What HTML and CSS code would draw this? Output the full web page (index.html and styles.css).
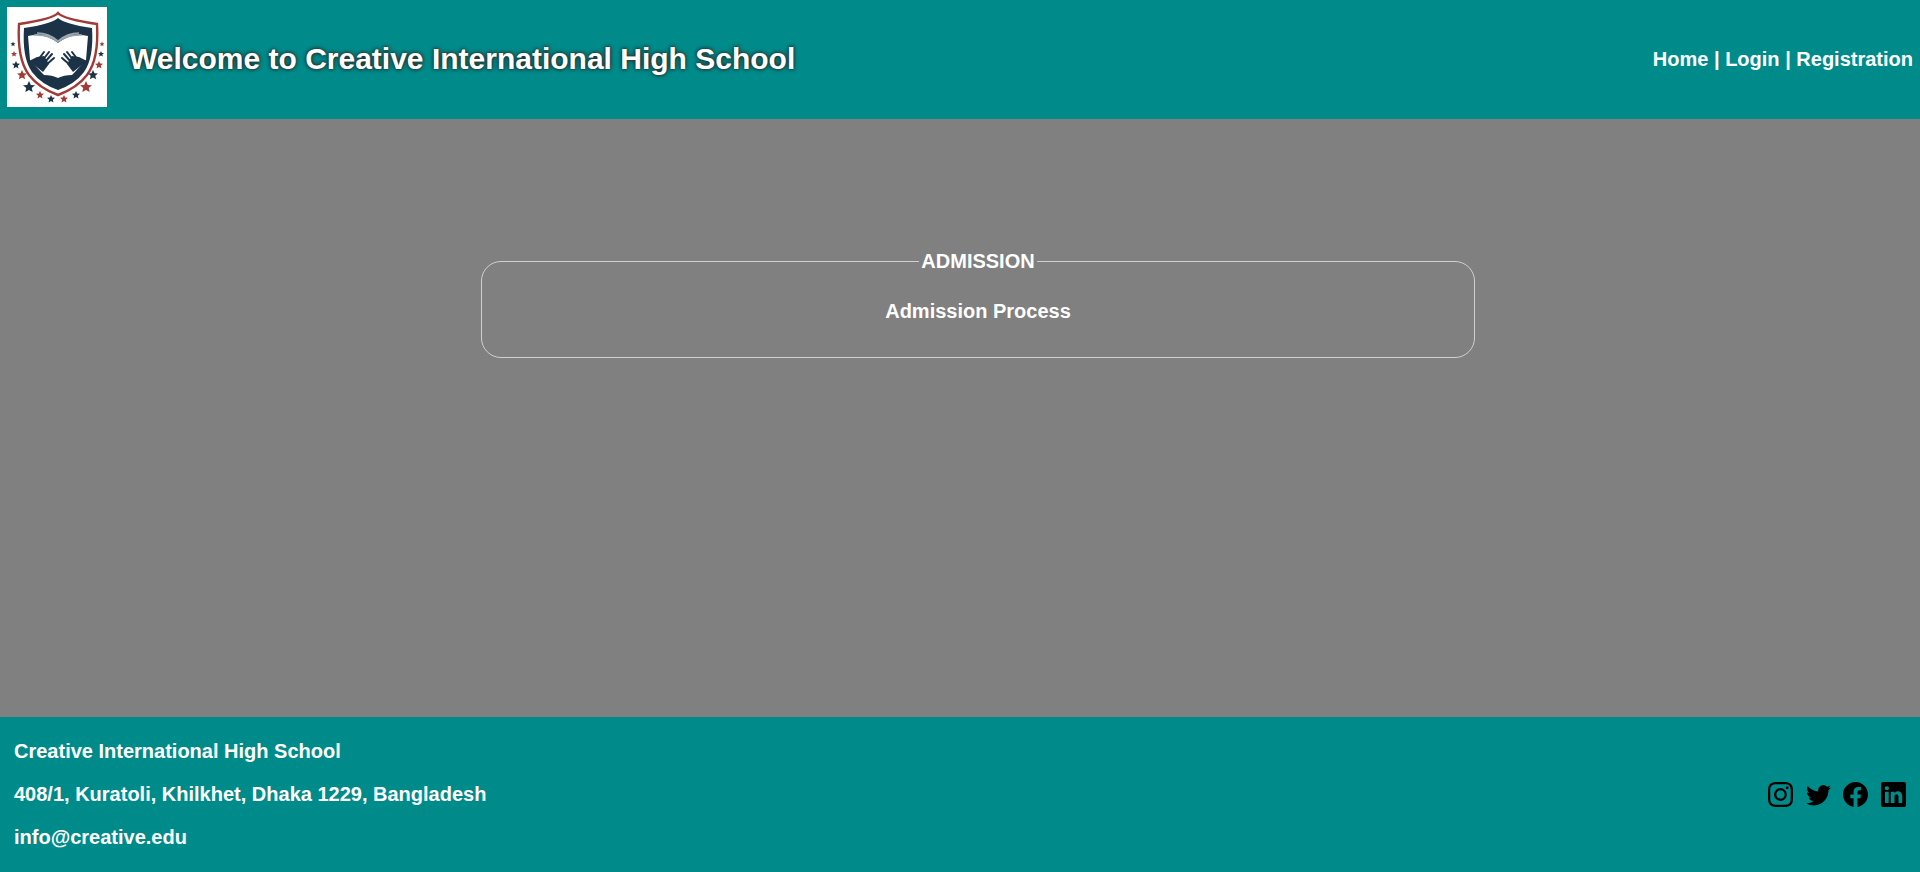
FILE: index.html
```html
<!DOCTYPE html>
<html lang="en">

<head>
    <meta charset="UTF-8" />
    <meta name="viewport" content="width=device-width, initial-scale=1.0" />
    <title>Creative International High School</title>
    <link rel="stylesheet" href="styles.css">
</head>

<body>
    <div class="page">
        <header class="header">
            <div class="brand">
                <div class="logo">
                    <svg viewBox="0 0 100 100" width="100" height="100">
                        <defs>
                            <polygon id="star" points="0,-1 .3,-.35 1,-.31 .46,.16 .62,.85 0,.48 -.62,.85 -.46,.16 -1,-.31 -.3,-.35" />
                            <g id="hand">
                                <path d="M22 54 L30 50 L37 49 L42 57 L36 65 Z" fill="#1c3347" />
                                <path d="M31 53 L37 45 M35 54 L42 45 M38 55 L45 47 M39 58 L47 51" stroke="#1c3347" stroke-width="2" stroke-linecap="round" fill="none" />
                            </g>
                        </defs>
                        <path d="M51 6 Q56 12 90 17 Q92 52 80 68 Q70 81 51 88 Q32 81 22 68 Q10 52 12 17 Q46 12 51 6 Z" fill="#fff" stroke="#a23b35" stroke-width="2.4" />
                        <path d="M51 11 Q58 17 85 21 Q87 51 77 65 Q68 77 51 83 Q34 77 25 65 Q15 51 17 21 Q44 17 51 11 Z" fill="#1c3347" />
                        <path d="M21 29 Q37 25 51 36 Q65 25 81 29 L79 53 L67 66 L65 68 Q57 68 51 71 Q45 68 37 68 L35 66 L23 53 Z" fill="#fff" />
                        <path d="M30 26 Q42 26 51 34 Q60 26 72 26 M27 28 Q41 27 51 35 Q61 27 75 28" fill="none" stroke="#9aa5ad" stroke-width="1.6" />
                        <use href="#hand" />
                        <use href="#hand" transform="translate(102 0) scale(-1 1)" />
                        <g fill="#1c3347">
                            <use href="#star" transform="translate(6 37) scale(2.5)" />
                            <use href="#star" transform="translate(9 58) scale(4)" />
                            <use href="#star" transform="translate(22 80) scale(6)" />
                            <use href="#star" transform="translate(44 92) scale(4)" />
                            <use href="#star" transform="translate(69 88) scale(4)" />
                            <use href="#star" transform="translate(86 68) scale(5)" />
                            <use href="#star" transform="translate(94 47) scale(3)" />
                        </g>
                        <g fill="#a23b35">
                            <use href="#star" transform="translate(7 47) scale(3)" />
                            <use href="#star" transform="translate(15 68) scale(5)" />
                            <use href="#star" transform="translate(33 88) scale(4)" />
                            <use href="#star" transform="translate(57 92) scale(4)" />
                            <use href="#star" transform="translate(79 80) scale(6)" />
                            <use href="#star" transform="translate(92 58) scale(4)" />
                            <use href="#star" transform="translate(95 37) scale(2.5)" />
                        </g>
                    </svg>
                </div>
                <h1 class="title">Welcome to Creative International High School</h1>
            </div>
            <nav class="nav">
                <a href="#">Home</a> | <a href="#">Login</a> | <a href="#">Registration</a>
            </nav>
        </header>

        <main class="main">
            <fieldset class="box">
                <legend>ADMISSION</legend>
                <p>Admission Process</p>
            </fieldset>
        </main>

        <footer class="footer">
            <div class="address">
                <p>Creative International High School</p>
                <p>408/1, Kuratoli, Khilkhet, Dhaka 1229, Bangladesh</p>
                <p>info@creative.edu</p>
            </div>
            <div class="social">
                <svg viewBox="0 0 16 16" fill="currentColor"><path d="M8 0C5.829 0 5.556.01 4.703.048 3.85.088 3.269.222 2.76.42a3.917 3.917 0 0 0-1.417.923A3.927 3.927 0 0 0 .42 2.76C.222 3.268.087 3.85.048 4.7.01 5.555 0 5.827 0 8.001c0 2.172.01 2.444.048 3.297.04.852.174 1.433.372 1.942.205.526.478.972.923 1.417.444.445.89.719 1.416.923.51.198 1.09.333 1.942.372C5.555 15.99 5.827 16 8 16s2.444-.01 3.298-.048c.851-.04 1.434-.174 1.943-.372a3.916 3.916 0 0 0 1.416-.923c.445-.445.718-.891.923-1.417.197-.509.332-1.09.372-1.942C15.99 10.445 16 10.173 16 8s-.01-2.445-.048-3.299c-.04-.851-.175-1.433-.372-1.941a3.926 3.926 0 0 0-.923-1.417A3.911 3.911 0 0 0 13.24.42c-.51-.198-1.092-.333-1.943-.372C10.443.01 10.172 0 7.998 0h.003zm-.717 1.442h.718c2.136 0 2.389.007 3.232.046.78.035 1.204.166 1.486.275.373.145.64.319.92.599.28.28.453.546.598.92.11.281.24.705.275 1.485.039.843.047 1.096.047 3.231s-.008 2.389-.047 3.232c-.035.78-.166 1.203-.275 1.485a2.47 2.47 0 0 1-.599.919c-.28.28-.546.453-.92.598-.28.11-.704.24-1.485.276-.843.038-1.096.047-3.232.047s-2.39-.009-3.233-.047c-.78-.036-1.203-.166-1.485-.276a2.478 2.478 0 0 1-.92-.598 2.48 2.48 0 0 1-.6-.92c-.109-.281-.24-.705-.275-1.485-.038-.843-.046-1.096-.046-3.233 0-2.136.008-2.388.046-3.231.036-.78.166-1.204.276-1.486.145-.373.319-.64.599-.92.28-.28.546-.453.92-.598.282-.11.705-.24 1.485-.276.738-.034 1.024-.044 2.515-.045v.002zm4.988 1.328a.96.96 0 1 0 0 1.92.96.96 0 0 0 0-1.92zm-4.27 1.122a4.109 4.109 0 1 0 0 8.217 4.109 4.109 0 0 0 0-8.217zm0 1.441a2.667 2.667 0 1 1 0 5.334 2.667 2.667 0 0 1 0-5.334z"/></svg>
                <svg viewBox="0 0 16 16" fill="currentColor"><path d="M5.026 15c6.038 0 9.341-5.003 9.341-9.334 0-.14 0-.282-.006-.422A6.685 6.685 0 0 0 16 3.542a6.658 6.658 0 0 1-1.889.518 3.301 3.301 0 0 0 1.447-1.817 6.533 6.533 0 0 1-2.087.793A3.286 3.286 0 0 0 7.875 6.03a9.325 9.325 0 0 1-6.767-3.429 3.289 3.289 0 0 0 1.018 4.382A3.323 3.323 0 0 1 .64 6.575v.045a3.288 3.288 0 0 0 2.632 3.218 3.203 3.203 0 0 1-.865.115 3.23 3.23 0 0 1-.614-.057 3.283 3.283 0 0 0 3.067 2.277A6.588 6.588 0 0 1 .78 13.58a6.32 6.32 0 0 1-.78-.045A9.344 9.344 0 0 0 5.026 15z"/></svg>
                <svg viewBox="0 0 16 16" fill="currentColor"><path d="M16 8.049c0-4.446-3.582-8.05-8-8.05C3.58 0-.002 3.603-.002 8.05c0 4.017 2.926 7.347 6.75 7.951v-5.625h-2.03V8.05H6.75V6.275c0-2.017 1.195-3.131 3.022-3.131.876 0 1.791.157 1.791.157v1.98h-1.009c-.993 0-1.303.621-1.303 1.258v1.51h2.218l-.354 2.326H9.25V16c3.824-.604 6.75-3.934 6.75-7.951z"/></svg>
                <svg viewBox="0 0 16 16" fill="currentColor"><path d="M0 1.146C0 .513.526 0 1.175 0h13.65C15.474 0 16 .513 16 1.146v13.708c0 .633-.526 1.146-1.175 1.146H1.175C.526 16 0 15.487 0 14.854V1.146zm4.943 12.248V6.169H2.542v7.225h2.401zm-1.2-8.212c.837 0 1.358-.554 1.358-1.248-.015-.709-.52-1.248-1.342-1.248-.822 0-1.359.54-1.359 1.248 0 .694.521 1.248 1.327 1.248h.016zm4.908 8.212V9.359c0-.216.016-.432.08-.586.173-.431.568-.878 1.232-.878.869 0 1.216.662 1.216 1.634v3.865h2.401V9.25c0-2.22-1.184-3.252-2.764-3.252-1.274 0-1.845.7-2.165 1.193v.025h-.016a5.54 5.54 0 0 1 .016-.025V6.169h-2.4c.03.678 0 7.225 0 7.225h2.4z"/></svg>
            </div>
        </footer>
    </div>
</body>

</html>
```

FILE: styles.css
```css
* {
    margin: 0;
    padding: 0;
    box-sizing: border-box;
}

body {
    font-family: "Liberation Sans", Arial, sans-serif;
    font-weight: bold;
    color: #fff;
    background: #808080;
}

.page {
    height: 100vh;
    display: flex;
    flex-direction: column;
}

.header {
    height: 119px;
    background: #008b8b;
    display: flex;
    justify-content: space-between;
    padding: 0 7px;
}

.brand {
    display: flex;
    align-items: flex-start;
    gap: 22px;
    padding-top: 7px;
}

.logo {
    width: 100px;
    height: 100px;
    background: #fff;
    overflow: hidden;
}

.logo svg {
    display: block;
    filter: blur(0.4px);
}

.title {
    font-size: 30px;
    line-height: 34px;
    margin-top: 35px;
    text-shadow: 0 0 5px #222, 0 0 3px #333;
}

.nav {
    font-size: 20px;
    line-height: 23px;
    margin-top: 48px;
}

.nav a {
    color: #fff;
    text-decoration: none;
}

.main {
    flex: 1;
    padding: 131px 0 0 36px;
}

.box {
    width: 994px;
    height: 108px;
    margin: 0 auto;
    border: 1px solid #d0d0d0;
    border-radius: 20px;
    text-align: center;
    font-size: 20px;
}

.box legend {
    margin: 0 auto;
    padding: 0 2px;
    font-size: 20px;
}

.box p {
    margin-top: 27px;
}

.footer {
    height: 155px;
    background: #008b8b;
    display: flex;
    justify-content: space-between;
    align-items: center;
    padding: 0 14px;
    font-size: 20px;
}

.address p {
    margin: 20px 0;
}

.social {
    display: flex;
    gap: 12.6px;
    color: #000;
}

.social svg {
    width: 25px;
    height: 25px;
}
```
